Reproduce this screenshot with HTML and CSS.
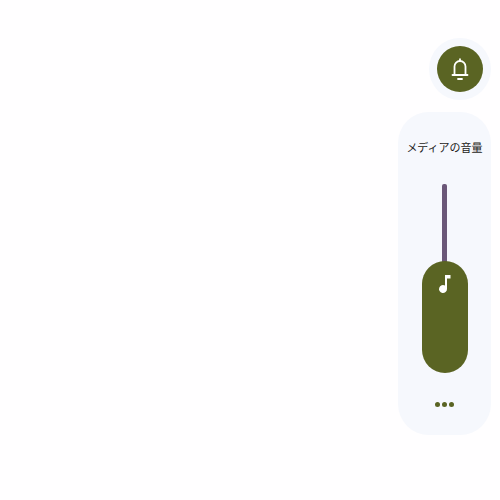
FILE: index.html
```html
<!DOCTYPE html>
<html lang="ja">
<head>
    <meta charset="UTF-8">
    <title>Volume</title>
    <link rel="stylesheet" href="styles.css">
</head>
<body>
    <div class="main">
        <div class="ringer">
            <button class="ringer-btn">
                <svg width="24" height="24" viewBox="0 0 24 24" fill="none" stroke="#fff" stroke-width="1.8" stroke-linecap="round" stroke-linejoin="round">
                    <path d="M4.5 18h15"/>
                    <path d="M6.5 18v-8.5a5.5 5.5 0 0 1 11 0v8.5"/>
                    <path d="M12 2.2v1.8"/>
                    <path d="M10 22h4"/>
                </svg>
            </button>
        </div>
        <div class="panel">
            <div class="label">メディアの音量</div>
            <div class="slider">
                <div class="track"></div>
                <div class="thumb">
                    <svg width="24" height="24" viewBox="0 0 24 24" fill="#fff">
                        <path d="M12 3v10.55A4 4 0 1 0 14 17V6.5h3.5V3z"/>
                    </svg>
                </div>
            </div>
            <div class="dots">
                <span class="dot"></span>
                <span class="dot"></span>
                <span class="dot"></span>
            </div>
        </div>
    </div>
</body>
</html>
```

FILE: styles.css
```css
*{
    padding: 0;
    margin: 0;
    box-sizing: border-box;
}

body{
    background-color: #fffeff;
    font-family: "Noto Sans CJK JP", "Noto Sans", sans-serif;
}
.main{
    width: 100%;
    height: 100vh;
    display: flex;
    flex-direction: column;
    align-items: flex-end;
    padding-top: 38px;
    padding-right: 9px;
}
.ringer{
    width: 62px;
    height: 62px;
    border-radius: 50%;
    background-color: #f6f8fd;
    display: flex;
    justify-content: center;
    align-items: center;
}
.ringer-btn{
    width: 46px;
    height: 46px;
    border: none;
    border-radius: 50%;
    background-color: #5a6423;
    display: flex;
    justify-content: center;
    align-items: center;
}
.panel{
    width: 93px;
    height: 323px;
    margin-top: 12px;
    border-radius: 31px;
    background-color: #f6f8fd;
    display: flex;
    flex-direction: column;
    align-items: center;
    padding-top: 26px;
}
.label{
    font-size: 11px;
    line-height: 18px;
    color: #1d1b20;
    white-space: nowrap;
}
.slider{
    margin-top: 28px;
    display: flex;
    flex-direction: column;
    align-items: center;
}
.track{
    width: 4.5px;
    height: 78px;
    border-radius: 2px 2px 0 0;
    background-color: #6b5778;
}
.thumb{
    width: 46px;
    height: 112px;
    margin-top: -1px;
    border-radius: 23px;
    background-color: #5a6423;
    display: flex;
    justify-content: center;
    padding-top: 11px;
}
.dots{
    margin-top: 29px;
    display: flex;
    gap: 2px;
}
.dot{
    width: 5px;
    height: 5px;
    border-radius: 50%;
    background-color: #5a6423;
}
```
